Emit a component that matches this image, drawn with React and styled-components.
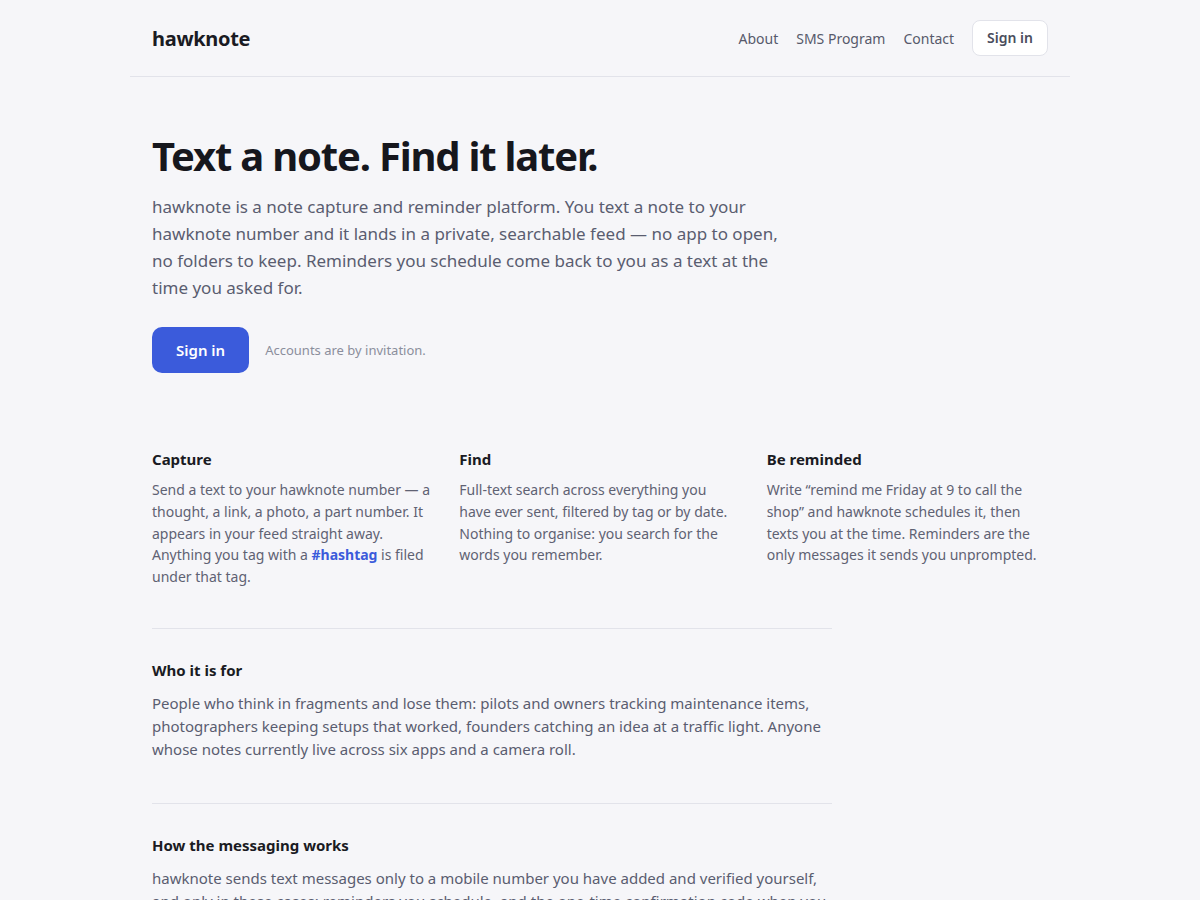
import styled, { createGlobalStyle } from "styled-components"

const GlobalStyle = createGlobalStyle`
* { box-sizing: border-box; }
body {
  margin: 0;
  background: #f6f6f9;
  font-family: "Noto Sans", "Open Sans", sans-serif;
  color: #1a1b23;
}
`

const Page = styled.div`
width: 940px;
margin: 0 auto;
`

const Header = styled.header`
box-sizing: content-box;
height: 76px;
padding: 0 22px;
display: flex;
align-items: center;
justify-content: space-between;
border-bottom: 1px solid #e2e3ea;
`

const Logo = styled.div`
font-size: 20px;
font-weight: 700;
color: #1a1b23;
letter-spacing: -0.015em;
`

const Nav = styled.nav`
display: flex;
align-items: center;
gap: 18px;
`

const NavLink = styled.a`
font-size: 14px;
color: #575a6b;
text-decoration: none;
`

const GhostButton = styled.button`
font-family: inherit;
font-size: 14px;
font-weight: 600;
line-height: 20px;
color: #4a4d5c;
background: #fff;
border: 1px solid #e2e3ea;
border-radius: 8px;
padding: 7px 14px;
`

const Main = styled.main`
padding: 0 22px;
`

const Hero = styled.section`
padding: 55px 0 76px;
`

const Title = styled.h1`
margin: 0;
font-size: 40px;
line-height: 48px;
font-weight: 700;
letter-spacing: -0.03em;
color: #16171d;
`

const Lead = styled.p`
margin: 13px 0 0;
max-width: 640px;
font-size: 17px;
line-height: 27px;
color: #5a5d70;
`

const Actions = styled.div`
margin-top: 26px;
display: flex;
align-items: center;
gap: 16px;
`

const PrimaryButton = styled.button`
font-family: inherit;
font-size: 15px;
font-weight: 600;
line-height: 22px;
color: #fff;
background: #3b5bdb;
border: none;
border-radius: 10px;
padding: 12px 24px;
`

const Note = styled.span`
font-size: 13px;
color: #8b8e9c;
`

const Features = styled.div`
display: grid;
grid-template-columns: repeat(3, 1fr);
gap: 26px;
padding-bottom: 40px;
`

const FeatureTitle = styled.h3`
margin: 0 0 10px;
font-size: 15px;
line-height: 20px;
font-weight: 700;
color: #1a1b23;
`

const FeatureText = styled.p`
margin: 0;
font-size: 14px;
line-height: 21.75px;
color: #5f6273;
`

const Tag = styled.a`
color: #3b5bdb;
font-weight: 700;
text-decoration: none;
`

const Section = styled.section`
max-width: 680px;
border-top: 1px solid #e2e3ea;
padding: 31px 0 42px;
`

const SectionTitle = styled.h2`
margin: 0 0 12px;
font-size: 15px;
line-height: 20px;
font-weight: 700;
color: #1a1b23;
`

const SectionText = styled.p`
margin: 0;
font-size: 15px;
line-height: 23px;
color: #5a5d70;
`

const FEATURES = [
  {
    title: "Capture",
    text: (
      <>
        Send a text to your hawknote number — a thought, a link, a photo, a part number. It appears in your feed straight away. Anything you tag with a <Tag href="#">#hashtag</Tag> is filed under that tag.
      </>
    ),
  },
  {
    title: "Find",
    text: "Full-text search across everything you have ever sent, filtered by tag or by date. Nothing to organise: you search for the words you remember.",
  },
  {
    title: "Be reminded",
    text: "Write \u201cremind me Friday at 9 to call the shop\u201d and hawknote schedules it, then texts you at the time. Reminders are the only messages it sends you unprompted.",
  },
]

const App = () => {
  return (
    <>
      <GlobalStyle />
      <Page>
        <Header>
          <Logo>hawknote</Logo>
          <Nav>
            <NavLink href="#">About</NavLink>
            <NavLink href="#">SMS Program</NavLink>
            <NavLink href="#">Contact</NavLink>
            <GhostButton>Sign in</GhostButton>
          </Nav>
        </Header>

        <Main>
          <Hero>
            <Title>Text a note. Find it later.</Title>
            <Lead>
              hawknote is a note capture and reminder platform. You text a note to your hawknote number and it lands in a private, searchable feed — no app to open, no folders to keep. Reminders you schedule come back to you as a text at the time you asked for.
            </Lead>
            <Actions>
              <PrimaryButton>Sign in</PrimaryButton>
              <Note>Accounts are by invitation.</Note>
            </Actions>
          </Hero>

          <Features>
            {FEATURES.map((f, index) => (
              <div key={String(index)}>
                <FeatureTitle>{f.title}</FeatureTitle>
                <FeatureText>{f.text}</FeatureText>
              </div>
            ))}
          </Features>

          <Section>
            <SectionTitle>Who it is for</SectionTitle>
            <SectionText>
              People who think in fragments and lose them: pilots and owners tracking maintenance items, photographers keeping setups that worked, founders catching an idea at a traffic light. Anyone whose notes currently live across six apps and a camera roll.
            </SectionText>
          </Section>

          <Section>
            <SectionTitle>How the messaging works</SectionTitle>
            <SectionText>
              hawknote sends text messages only to a mobile number you have added and verified yourself, and only in these cases: reminders you schedule, and the one-time confirmation code when you add a number. Reply STOP at any time to opt out.
            </SectionText>
          </Section>
        </Main>
      </Page>
    </>
  )
}

export default App
